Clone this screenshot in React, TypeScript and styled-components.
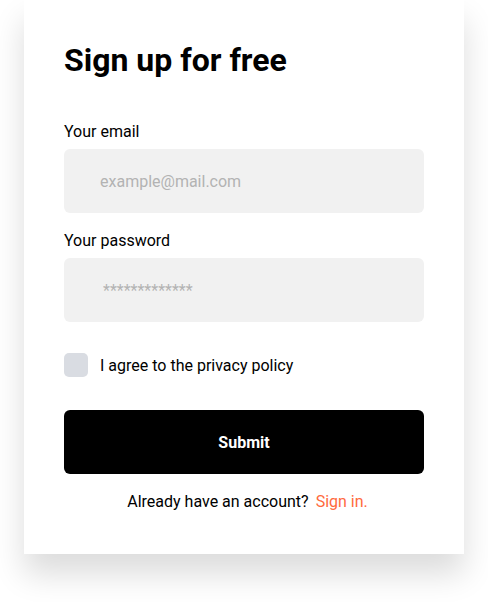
import React from "react";
import styled, { createGlobalStyle } from "styled-components";

const Global = createGlobalStyle`
  html, body { margin: 0; padding: 0; background: #ffffff; }
  body { font-family: Roboto, "Liberation Sans", Arial, sans-serif; }
  * { box-sizing: border-box; }
`;

const Page = styled.div`
  padding: 0 24px 48px;
`;

const Card = styled.form`
  width: 440px;
  background: #ffffff;
  box-shadow: 0 20px 30px rgba(0, 0, 0, 0.14);
  padding: 40px 40px 42px;
  display: flex;
  flex-direction: column;
`;

const Title = styled.h1`
  margin: 0 0 42px;
  font-size: 32px;
  line-height: 40px;
  font-weight: 700;
  color: #000;
`;

const Field = styled.div`
  display: flex;
  flex-direction: column;
  margin-bottom: 18px;
`;

const Label = styled.label`
  font-size: 16px;
  line-height: 20px;
  color: #000;
  margin-bottom: 7px;
`;

const Input = styled.input<{ $stars?: boolean }>`
  height: 64px;
  width: 100%;
  border: none;
  border-radius: 6px;
  background: #f1f1f1;
  padding: 0 0 0 ${(p) => (p.$stars ? "39px" : "36px")};
  font-family: Roboto, "Liberation Sans", Arial, sans-serif;
  font-size: 16px;
  color: #000;
  outline: none;
  &::placeholder { color: #b3b3b3; }
`;

const CheckRow = styled.label`
  display: flex;
  align-items: center;
  gap: 12px;
  margin: 13px 0 33px;
  font-size: 16px;
  color: #000;
`;

const Box = styled.span`
  width: 24px;
  height: 24px;
  border-radius: 5px;
  background: #d9dce2;
  flex-shrink: 0;
`;

const Submit = styled.button`
  height: 64px;
  width: 100%;
  border: none;
  border-radius: 6px;
  background: #000;
  color: #fff;
  font-family: Roboto, "Liberation Sans", Arial, sans-serif;
  font-size: 16px;
  font-weight: 700;
`;

const Footer = styled.p`
  margin: 18px 0 0;
  padding-left: 7px;
  text-align: center;
  font-size: 16px;
  line-height: 20px;
  color: #000;
`;

const SignIn = styled.a`
  color: #ff6a3d;
  margin-left: 7px;
  text-decoration: none;
`;

export default function App() {
  return (
    <Page>
      <Global />
      <Card onSubmit={(e) => e.preventDefault()}>
        <Title>Sign up for free</Title>
        <Field>
          <Label>Your email</Label>
          <Input placeholder="example@mail.com" />
        </Field>
        <Field>
          <Label>Your password</Label>
          <Input $stars placeholder="*************" />
        </Field>
        <CheckRow>
          <Box />
          I agree to the privacy policy
        </CheckRow>
        <Submit type="submit">Submit</Submit>
        <Footer>
          Already have an account?<SignIn href="#">Sign in.</SignIn>
        </Footer>
      </Card>
    </Page>
  );
}
